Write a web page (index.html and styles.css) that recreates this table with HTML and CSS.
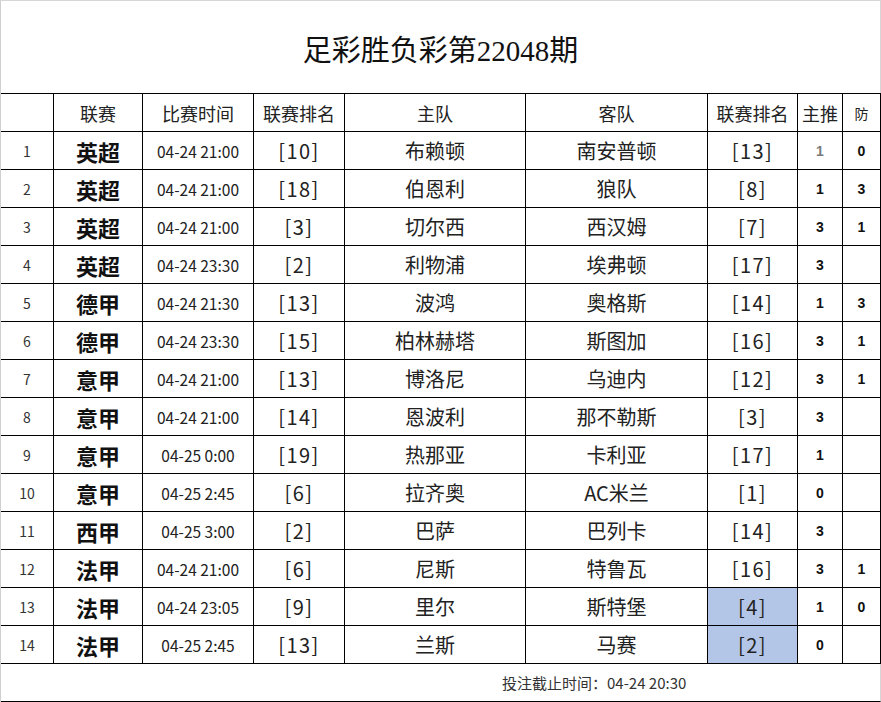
FILE: index.html
```html
<!DOCTYPE html>
<html lang="zh-CN">
<head>
<meta charset="utf-8">
<title>足彩胜负彩第22048期</title>
<link rel="stylesheet" href="styles.css">
</head>
<body>
<div class="sheet">
  <div class="title">足彩胜负彩第22048期</div>
  <div class="grid">
    <div class="c h"></div>
    <div class="c h">联赛</div>
    <div class="c h">比赛时间</div>
    <div class="c h">联赛排名</div>
    <div class="c h">主队</div>
    <div class="c h">客队</div>
    <div class="c h">联赛排名</div>
    <div class="c h">主推</div>
    <div class="c h small">防</div>

    <div class="c no">1</div><div class="c lg">英超</div><div class="c tm">04-24 21:00</div><div class="c rk">[10]</div><div class="c tn">布赖顿</div><div class="c tn">南安普顿</div><div class="c rk">[13]</div><div class="c pk dim">1</div><div class="c pk">0</div>
    <div class="c no">2</div><div class="c lg">英超</div><div class="c tm">04-24 21:00</div><div class="c rk">[18]</div><div class="c tn">伯恩利</div><div class="c tn">狼队</div><div class="c rk">[8]</div><div class="c pk">1</div><div class="c pk">3</div>
    <div class="c no">3</div><div class="c lg">英超</div><div class="c tm">04-24 21:00</div><div class="c rk">[3]</div><div class="c tn">切尔西</div><div class="c tn">西汉姆</div><div class="c rk">[7]</div><div class="c pk">3</div><div class="c pk">1</div>
    <div class="c no">4</div><div class="c lg">英超</div><div class="c tm">04-24 23:30</div><div class="c rk">[2]</div><div class="c tn">利物浦</div><div class="c tn">埃弗顿</div><div class="c rk">[17]</div><div class="c pk">3</div><div class="c pk"></div>
    <div class="c no">5</div><div class="c lg">德甲</div><div class="c tm">04-24 21:30</div><div class="c rk">[13]</div><div class="c tn">波鸿</div><div class="c tn">奥格斯</div><div class="c rk">[14]</div><div class="c pk">1</div><div class="c pk">3</div>
    <div class="c no">6</div><div class="c lg">德甲</div><div class="c tm">04-24 23:30</div><div class="c rk">[15]</div><div class="c tn">柏林赫塔</div><div class="c tn">斯图加</div><div class="c rk">[16]</div><div class="c pk">3</div><div class="c pk">1</div>
    <div class="c no">7</div><div class="c lg">意甲</div><div class="c tm">04-24 21:00</div><div class="c rk">[13]</div><div class="c tn">博洛尼</div><div class="c tn">乌迪内</div><div class="c rk">[12]</div><div class="c pk">3</div><div class="c pk">1</div>
    <div class="c no">8</div><div class="c lg">意甲</div><div class="c tm">04-24 21:00</div><div class="c rk">[14]</div><div class="c tn">恩波利</div><div class="c tn">那不勒斯</div><div class="c rk">[3]</div><div class="c pk">3</div><div class="c pk"></div>
    <div class="c no">9</div><div class="c lg">意甲</div><div class="c tm">04-25 0:00</div><div class="c rk">[19]</div><div class="c tn">热那亚</div><div class="c tn">卡利亚</div><div class="c rk">[17]</div><div class="c pk">1</div><div class="c pk"></div>
    <div class="c no">10</div><div class="c lg">意甲</div><div class="c tm">04-25 2:45</div><div class="c rk">[6]</div><div class="c tn">拉齐奥</div><div class="c tn">AC米兰</div><div class="c rk">[1]</div><div class="c pk">0</div><div class="c pk"></div>
    <div class="c no">11</div><div class="c lg">西甲</div><div class="c tm">04-25 3:00</div><div class="c rk">[2]</div><div class="c tn">巴萨</div><div class="c tn">巴列卡</div><div class="c rk">[14]</div><div class="c pk">3</div><div class="c pk"></div>
    <div class="c no">12</div><div class="c lg">法甲</div><div class="c tm">04-24 21:00</div><div class="c rk">[6]</div><div class="c tn">尼斯</div><div class="c tn">特鲁瓦</div><div class="c rk">[16]</div><div class="c pk">3</div><div class="c pk">1</div>
    <div class="c no">13</div><div class="c lg">法甲</div><div class="c tm">04-24 23:05</div><div class="c rk">[9]</div><div class="c tn">里尔</div><div class="c tn">斯特堡</div><div class="c rk hl">[4]</div><div class="c pk">1</div><div class="c pk">0</div>
    <div class="c no">14</div><div class="c lg">法甲</div><div class="c tm">04-25 2:45</div><div class="c rk">[13]</div><div class="c tn">兰斯</div><div class="c tn">马赛</div><div class="c rk hl">[2]</div><div class="c pk">0</div><div class="c pk"></div>

    <div class="foot">投注截止时间：04-24 20:30</div>
  </div>
</div>
</body>
</html>
```
FILE: styles.css
```css
html, body {
  margin: 0;
  padding: 0;
  background: #ffffff;
}
.sheet {
  width: 881px;
  height: 702px;
  box-sizing: border-box;
  border-left: 1px solid #cfcfcf;
  border-top: 1px solid #d6d6d6;
  background: #ffffff;
  font-family: "Noto Sans CJK SC", "Liberation Sans", sans-serif;
  color: #1a1a1a;
  overflow: hidden;
}
.title {
  height: 92px;
  box-sizing: border-box;
  border-right: 1px solid #d6d6d6;
  display: flex;
  align-items: center;
  justify-content: center;
  padding-top: 2px;
  font-family: "Liberation Serif", "Noto Sans CJK SC", serif;
  font-size: 29px;
  color: #111;
}
.grid {
  display: grid;
  grid-template-columns: 53px 89px 111px 91px 181px 182px 90px 45px 38px;
  grid-auto-rows: 38px;
  border-top: 1px solid #000;
}
.c {
  box-sizing: border-box;
  border-right: 1px solid #000;
  border-bottom: 1px solid #000;
  display: flex;
  align-items: center;
  justify-content: center;
  white-space: nowrap;
}
.h {
  font-size: 18px;
  color: #222;
}
.h.small {
  font-size: 14px;
}
.no {
  font-size: 14px;
  color: #333;
}
.lg {
  font-size: 22px;
  font-weight: bold;
  color: #111;
}
.tm {
  font-size: 15.5px;
  color: #222;
}
.rk {
  font-size: 20px;
  letter-spacing: 1.5px;
  color: #222;
}
.tn {
  font-size: 20px;
  color: #222;
}
.pk {
  font-family: "Liberation Sans", "Noto Sans CJK SC", sans-serif;
  font-size: 14px;
  font-weight: bold;
  color: #111;
}
.pk.dim {
  color: #7a7a7a;
}
.hl {
  background: #b4c6e7;
}
.foot {
  grid-column: 1 / -1;
  box-sizing: border-box;
  border-right: 1px solid #d6d6d6;
  border-bottom: 1px solid #000;
  display: flex;
  align-items: center;
  padding-left: 501px;
  font-size: 15px;
  color: #333;
}
```
